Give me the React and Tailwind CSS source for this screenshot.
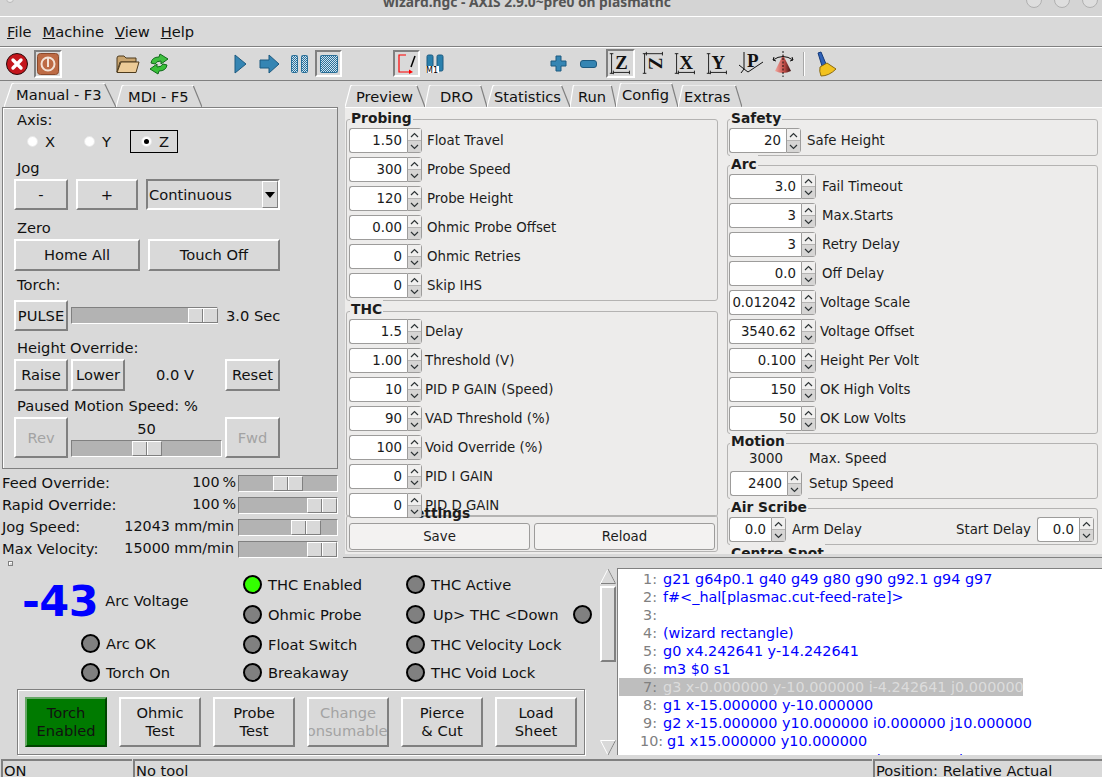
import React from 'react';

const raised = "border-2 border-t-white border-l-white border-r-[#808080] border-b-[#808080]";
const sunken = "border-2 border-t-[#808080] border-l-[#808080] border-r-white border-b-white";

const Btn = ({ className = "", children, disabled }) => (
  <div className={`${raised} flex items-center justify-center shrink-0 overflow-hidden ${disabled ? "text-[#a3a3a3]" : ""} ${className}`}>
    {children}
  </div>
);

// tab with slanted sides, drawn over its own text box
const Tab = ({ w, label, active, textLeft }) => (
  <div className={`relative shrink-0 ${w} ${active ? "h-[24px] z-10 bg-[#d9d9d9]" : "h-[22px]"}`}>
    <svg className="absolute inset-0 w-full h-full" preserveAspectRatio="none" viewBox="0 0 100 24" fill="none">
      <path d="M0 24 L7 1 L9 0 L88 0 L90 1" stroke="#fff" strokeWidth="1.2" vectorEffect="non-scaling-stroke" />
      <path d="M90 1 L100 24" stroke="#808080" strokeWidth="1.2" vectorEffect="non-scaling-stroke" />
    </svg>
    <div className={`absolute top-[3px] leading-[18px] whitespace-nowrap ${textLeft}`}>{label}</div>
  </div>
);

const Slider = ({ w, h = "h-[17px]", thumb }) => (
  <div className={`${w} ${h} shrink-0 bg-[#b3b3b3] flex items-stretch border border-t-[#808080] border-l-[#808080] border-r-white border-b-white`}>
    <div className={`${thumb} w-[30px] bg-[#d9d9d9] flex border border-t-white border-l-white border-r-[#808080] border-b-[#808080]`}>
      <div className="w-[14px] border-r border-[#808080]" />
      <div className="w-[14px] border-l border-white" />
    </div>
  </div>
);

const Radio = ({ on }) => (
  <div className="w-[11px] h-[11px] rounded-full bg-white border border-[#e8e8e8] flex items-center justify-center shrink-0">
    {on && <div className="w-[5px] h-[5px] rounded-full bg-black" />}
  </div>
);

const Chevron = ({ up }) => (
  <svg width="9" height="6" viewBox="0 0 9 6" fill="none" stroke="#2e3436" strokeWidth="1.2">
    <path d={up ? "M1 5 L4.5 1.5 L8 5" : "M1 1 L4.5 4.5 L8 1"} />
  </svg>
);

const Spin = ({ value, w = "w-[73px]", className = "" }) => (
  <div className={`${w} h-[25px] shrink-0 flex relative z-20 ${className}`}>
    <div className="flex-1 bg-white border border-[#9d9c9b] rounded-l-[3px] border-r-0 text-right pr-[5px] leading-[23px] text-[#1a1a1a]">{value}</div>
    <div className="w-[15px] border border-[#9d9c9b] rounded-r-[3px] flex flex-col">
      <div className="flex-1 bg-[#f0efee] flex items-center justify-center border-b border-[#b5b4b3]"><Chevron up /></div>
      <div className="flex-1 bg-[#d6d5d4] flex items-center justify-center"><Chevron /></div>
    </div>
  </div>
);

const Row = ({ value, label, w, gap = "ml-[5px]" }) => (
  <div className="flex items-center h-[25px] mb-[4px]">
    <Spin value={value} w={w} />
    <span className={`${gap} whitespace-nowrap`}>{label}</span>
  </div>
);

const Frame = ({ title, className = "", legend = "-top-[11px] left-[3px] bg-[#edeceb] px-[1px]", children }) => (
  <div className={`relative border border-[#b4b3b2] rounded-[3px] ${className}`}>
    <div className={`absolute z-10 font-bold text-[13.8px] leading-[18px] whitespace-nowrap ${legend}`}>{title}</div>
    {children}
  </div>
);

const Ind = ({ on, label, className = "", textGap = "ml-[6px]", children }) => (
  <div className={`flex items-center h-[19px] ${className}`}>
    <div className={`w-[19px] h-[19px] rounded-full border-2 border-black shrink-0 ${on ? "bg-[#33ff00]" : "bg-[#808080]"}`} />
    <span className={`${textGap} whitespace-nowrap`}>{label}</span>
    {children}
  </div>
);

const TBtn = ({ children, className = "" }) => (
  <div className={`${raised} w-[82px] h-[50px] shrink-0 flex flex-col items-center justify-center leading-[18px] overflow-hidden whitespace-nowrap ${className}`}>{children}</div>
);

const Dither = ({ id }) => (
  <defs>
    <pattern id={id} width="2" height="2" patternUnits="userSpaceOnUse">
      <rect width="2" height="2" fill="#cfe3f0" />
      <rect width="1" height="1" fill="#2a7099" />
      <rect x="1" y="1" width="1" height="1" fill="#2a7099" />
    </pattern>
  </defs>
);

const Axes = ({ children, top }) => (
  <g stroke="#111" strokeWidth="1" fill="none">
    <path d="M2 3 H6 M4 3 V25 M2 25 H6" />
    {top ? <path d="M6 1 V5 M6 3 H24 M24 1 V5" /> : <path d="M6 22 V26 M6 24 H24 M24 22 V26" />}
    {children}
  </g>
);

const ViewLetter = ({ ch, rot }) => (
  <text x="15" y="20" textAnchor="middle" fontFamily="Liberation Serif" fontWeight="bold" fontSize="21" fill="#111" stroke="none" transform={rot ? "rotate(90 15 14)" : undefined}>{ch}</text>
);

const code = [
  ["1:", "g21 g64p0.1 g40 g49 g80 g90 g92.1 g94 g97"],
  ["2:", "f#<_hal[plasmac.cut-feed-rate]>"],
  ["3:", ""],
  ["4:", "(wizard rectangle)"],
  ["5:", "g0 x4.242641 y-14.242641"],
  ["6:", "m3 $0 s1"],
  ["7:", "g3 x-0.000000 y-10.000000 i-4.242641 j0.000000"],
  ["8:", "g1 x-15.000000 y-10.000000"],
  ["9:", "g2 x-15.000000 y10.000000 i0.000000 j10.000000"],
  ["10:", "g1 x15.000000 y10.000000"],
  ["11:", "g2 x25.000000 y-10.000000 i-0.000000 j-10.000000"],
];

const probing = [["1.50", "Float Travel"], ["300", "Probe Speed"], ["120", "Probe Height"], ["0.00", "Ohmic Probe Offset"], ["0", "Ohmic Retries"], ["0", "Skip IHS"]];
const thc = [["1.5", "Delay"], ["1.00", "Threshold (V)"], ["10", "PID P GAIN (Speed)"], ["90", "VAD Threshold (%)"], ["100", "Void Override (%)"], ["0", "PID I GAIN"], ["0", "PID D GAIN"]];
const arc = [["3.0", "Fail Timeout", "ml-[6px]"], ["3", "Max.Starts", "ml-[6px]"], ["3", "Retry Delay", "ml-[6px]"], ["0.0", "Off Delay", "ml-[6px]"], ["0.012042", "Voltage Scale", "ml-[4px]"], ["3540.62", "Voltage Offset", "ml-[4px]"], ["0.100", "Height Per Volt", "ml-[4px]"], ["150", "OK High Volts", "ml-[4px]"], ["50", "OK Low Volts", "ml-[4px]"]];

const Toolbar = () => (
  <div className="h-[34px] shrink-0 flex items-center border-b border-[#808080] shadow-[inset_0_1px_0_#fff]">
    <svg className="ml-[6px] shrink-0" width="22" height="22" viewBox="0 0 22 22">
      <circle cx="11" cy="11" r="10.5" fill="#c4161c" stroke="#2a0a0a" />
      <path d="M7 7 L15 15 M15 7 L7 15" stroke="#fff" strokeWidth="3.4" strokeLinecap="round" />
    </svg>
    <div className={`${sunken} ml-[6px] w-[28px] h-[28px] shrink-0 flex items-center justify-center`}>
      <svg width="22" height="22" viewBox="0 0 22 22">
        <rect x="0.5" y="0.5" width="21" height="21" rx="3" fill="#bd6b45" stroke="#8a4a2c" />
        <circle cx="11" cy="11" r="6.5" fill="none" stroke="#f3e2d6" strokeWidth="2" />
        <rect x="10" y="5" width="2" height="9" fill="#f3e2d6" />
      </svg>
    </div>
    <svg className="ml-[54px] shrink-0" width="24" height="20" viewBox="0 0 24 20">
      <path d="M1 4 Q1 2 3 2 H8 L10 4 H20 V8 H4 L1 18 Z" fill="#c9a56f" stroke="#4d3b1e" />
      <path d="M5 8 H23 L20 18.5 H1 Z" fill="#eccb97" stroke="#4d3b1e" />
    </svg>
    <svg className="ml-[7px] shrink-0" width="24" height="24" viewBox="0 0 24 24">
      <path d="M4 11 Q5 5 12 5 L13 2 L21 7 L14 12 L14 9 Q9 9 8 12 Z" fill="#3fbf3f" stroke="#0f6a1a" />
      <path d="M20 13 Q19 19 12 19 L11 22 L3 17 L10 12 L10 15 Q15 15 16 12 Z" fill="#38c038" stroke="#0f6a1a" />
    </svg>
    <svg className="ml-[63px] shrink-0" width="13" height="20" viewBox="0 0 13 20">
      <path d="M1 1 L12 10 L1 19 Z" fill="#3585b3" stroke="#1d5a80" />
    </svg>
    <svg className="ml-[12px] shrink-0" width="21" height="20" viewBox="0 0 21 20">
      <path d="M1 6 H10 V1 L20 10 L10 19 V14 H1 Z" fill="#3585b3" stroke="#1d5a80" strokeLinejoin="round" />
    </svg>
    <svg className="ml-[11px] shrink-0" width="17" height="18" viewBox="0 0 17 18">
      <Dither id="d1" />
      <rect x="0.5" y="0.5" width="6" height="17" rx="1" fill="url(#d1)" stroke="#2a7099" />
      <rect x="10.5" y="0.5" width="6" height="17" rx="1" fill="url(#d1)" stroke="#2a7099" />
    </svg>
    <div className={`${sunken} ml-[7px] w-[27px] h-[27px] shrink-0 flex items-center justify-center`}>
      <svg width="18" height="18" viewBox="0 0 18 18">
        <Dither id="d2" />
        <rect x="0.5" y="0.5" width="17" height="17" rx="1" fill="url(#d2)" stroke="#2a7099" />
      </svg>
    </div>
    <div className={`${sunken} ml-[51px] w-[27px] h-[27px] shrink-0 flex items-center justify-center`}>
      <svg width="21" height="21" viewBox="0 0 21 21">
        <path d="M10 2 H3 V19 H14" fill="none" stroke="#f00" strokeWidth="1.2" />
        <path d="M13 16.5 L17 19 L13 21 Z" fill="#f00" />
        <path d="M19 3 L15 14" stroke="#000" strokeWidth="1.5" />
      </svg>
    </div>
    <svg className="ml-[6px] shrink-0" width="19" height="20" viewBox="0 0 19 20">
      <rect x="1" y="1" width="6" height="16" rx="1.5" fill="#2a80ad" stroke="#1d5a80" />
      <rect x="11" y="1" width="6" height="16" rx="1.5" fill="#2a80ad" stroke="#1d5a80" />
      <rect x="0" y="12" width="13" height="7" fill="#fff" />
      <text x="0" y="19" fontFamily="DejaVu Sans" fontSize="8" fill="#000">M1</text>
    </svg>
    <svg className="ml-[105px] shrink-0" width="17" height="17" viewBox="0 0 17 17">
      <path d="M6 1 H11 V6 H16 V11 H11 V16 H6 V11 H1 V6 H6 Z" fill="#3585b3" stroke="#1d5a80" strokeLinejoin="round" />
    </svg>
    <svg className="ml-[13px] shrink-0" width="17" height="8" viewBox="0 0 17 8">
      <rect x="0.5" y="0.5" width="16" height="7" rx="2.5" fill="#3585b3" stroke="#1d5a80" />
    </svg>
    <div className={`${sunken} ml-[9px] w-[29px] h-[29px] shrink-0 flex items-center justify-center`}>
      <svg width="25" height="25" viewBox="0 0 28 28"><Axes><ViewLetter ch="Z" /></Axes></svg>
    </div>
    <svg className="ml-[6px] shrink-0" width="25" height="25" viewBox="0 0 28 28"><Axes top><ViewLetter ch="Z" rot /></Axes></svg>
    <svg className="ml-[7px] shrink-0" width="25" height="25" viewBox="0 0 28 28"><Axes><ViewLetter ch="X" /></Axes></svg>
    <svg className="ml-[7px] shrink-0" width="25" height="25" viewBox="0 0 28 28"><Axes><ViewLetter ch="Y" /></Axes></svg>
    <svg className="ml-[6px] shrink-0" width="28" height="25" viewBox="0 0 28 25">
      <g stroke="#111" fill="none">
        <path d="M8 1 V18 L3 14 M8 18 L5 22 M8 18 L12 21 M12 21 L27 11" />
      </g>
      <text x="11" y="16" fontFamily="Liberation Serif" fontWeight="bold" fontSize="19" fill="#111">P</text>
    </svg>
    <svg className="ml-[8px] shrink-0" width="22" height="26" viewBox="0 0 22 26">
      <defs>
        <linearGradient id="cone" x1="0" x2="1" y1="0" y2="0">
          <stop offset="0" stopColor="#f0a8a0" />
          <stop offset="0.55" stopColor="#c8504a" />
          <stop offset="1" stopColor="#3c1010" />
        </linearGradient>
      </defs>
      <path d="M11 4 L3 20 Q11 24 19 20 Z" fill="url(#cone)" />
      <path d="M1 9 Q11 2 21 9 M1 9 L2 6 M1 9 L4 10 M21 9 L20 6 M21 9 L18 10" stroke="#111" fill="none" />
      <path d="M11 0 V26" stroke="#111" strokeDasharray="2 1.5" />
    </svg>
    <div className="ml-[9px] w-[1px] h-[24px] bg-[#a8a8a8] border-r border-white box-content shrink-0" />
    <svg className="ml-[10px] shrink-0" width="22" height="26" viewBox="0 0 22 26">
      <path d="M3 2 L6 1 L11 13 L7 15 Z" fill="#2f62b8" stroke="#143a7a" />
      <path d="M5 16 L12 12 L21 18 Q14 25 6 25 Q4 20 5 16 Z" fill="#f2c21f" stroke="#8a6a10" />
    </svg>
  </div>
);

const ManualTab = () => (
  <div className="ml-[2px] w-[336px] h-[362px] border border-[#808080] shadow-[inset_1px_1px_0_#fff] pl-[11px] pt-[3px] shrink-0">
    <div className="ml-[3px] leading-[18px]">Axis:</div>
    <div className="flex items-center h-[23px] mt-[1px]">
      <div className="ml-[13px] w-[57px] flex items-center"><Radio /><span className="ml-[7px]">X</span></div>
      <div className="w-[46px] flex items-center"><Radio /><span className="ml-[7px]">Y</span></div>
      <div className="w-[48px] h-[23px] border border-black flex items-center pl-[10px]"><Radio on /><span className="ml-[7px]">Z</span></div>
    </div>
    <div className="ml-[3px] mt-[6px] leading-[18px]">Jog</div>
    <div className="flex mt-[2px] h-[31px]">
      <Btn className="w-[54px]">-</Btn>
      <Btn className="w-[62px] ml-[8px]">+</Btn>
      <div className={`${sunken} w-[134px] ml-[8px] flex items-center pl-[1px] justify-between`}>
        <span>Continuous</span>
        <div className="w-[16px] h-[27px] border border-[#808080] border-l-white border-t-white flex items-center justify-center">
          <div className="w-0 h-0 border-x-[5px] border-x-transparent border-t-[6px] border-t-black" />
        </div>
      </div>
    </div>
    <div className="ml-[3px] mt-[9px] leading-[18px]">Zero</div>
    <div className="flex mt-[2px] h-[32px]">
      <Btn className="w-[126px]">Home All</Btn>
      <Btn className="w-[132px] ml-[8px]">Touch Off</Btn>
    </div>
    <div className="ml-[3px] mt-[5px] leading-[18px]">Torch:</div>
    <div className="flex items-center mt-[6px] h-[31px]">
      <Btn className="w-[54px] h-[31px]">PULSE</Btn>
      <div className="ml-[3px]"><Slider w="w-[147px]" thumb="ml-[116px]" /></div>
      <span className="ml-[8px] whitespace-nowrap">3.0 Sec</span>
    </div>
    <div className="ml-[3px] mt-[8px] leading-[18px]">Height Override:</div>
    <div className="flex items-center mt-[2px] h-[32px]">
      <Btn className="w-[54px] h-[32px]">Raise</Btn>
      <Btn className="w-[54px] h-[32px] ml-[3px]">Lower</Btn>
      <span className="w-[100px] text-center">0.0 V</span>
      <Btn className="w-[55px] h-[32px]">Reset</Btn>
    </div>
    <div className="ml-[3px] mt-[6px] leading-[18px]">Paused Motion Speed: %</div>
    <div className="flex mt-[2px] h-[41px]">
      <Btn disabled className="w-[54px]">Rev</Btn>
      <div className="ml-[3px] w-[151px] flex flex-col items-center justify-end pb-[1px]">
        <div className="leading-[18px] mb-[2px]">50</div>
        <Slider w="w-[151px]" thumb="ml-[60px]" />
      </div>
      <Btn disabled className="w-[55px] ml-[3px]">Fwd</Btn>
    </div>
  </div>
);

const speeds = [
  ["Feed Override:", "100\u2009%", "ml-[2px]", "ml-[34px]"],
  ["Rapid Override:", "100\u2009%", "ml-[2px]", "ml-[68px]"],
  ["Jog Speed:", "12043 mm/min", "ml-[4px]", "ml-[52px]"],
  ["Max Velocity:", "15000 mm/min", "ml-[4px]", "ml-[68px]"],
];

const LeftColumn = () => (
  <div className="w-[343px] shrink-0 flex flex-col">
    <div className="flex items-end h-[26px] shrink-0 pl-[4px]">
      <Tab w="w-[112px]" label="Manual - F3" active textLeft="left-[12px]" />
      <Tab w="w-[86px]" label="MDI - F5" textLeft="left-[12px]" />
    </div>
    <ManualTab />
    <div className="pt-[3px] pl-[2px] w-[338px] shrink-0">
      {speeds.map(([label, val, gap, thumb]) => (
        <div key={label} className="flex items-center h-[22px] whitespace-nowrap">
          <span className="flex-1">{label}</span>
          <span className="text-[14.3px]">{val}</span>
          <div className={gap}><Slider w="w-[100px]" thumb={thumb} /></div>
        </div>
      ))}
    </div>
    <div className="w-[5px] h-[5px] ml-[8px] mt-[1px] shrink-0 bg-[#d9d9d9] border border-[#808080] shadow-[inset_1px_1px_0_#fff]" />
  </div>
);

const RightColumn = () => (
  <div className="flex-1 flex flex-col border-b border-[#808080] min-w-0">
    <div className="flex items-end h-[26px] shrink-0 pl-[2px]">
      <Tab w="w-[80px]" label="Preview" textLeft="left-[11px]" />
      <Tab w="w-[62px]" label="DRO" textLeft="left-[15px]" />
      <Tab w="w-[83px]" label="Statistics" textLeft="left-[7px]" />
      <Tab w="w-[46px]" label="Run" textLeft="left-[8px]" />
      <Tab w="w-[62px]" label="Config" active textLeft="left-[6px]" />
      <Tab w="w-[64px]" label="Extras" textLeft="left-[6px]" />
    </div>
    <div className="ml-[2px] h-[447px] shrink-0 bg-[#edeceb] flex overflow-hidden border-t border-white text-[#1c1c1c] text-[13.33px]">
      <div className="w-[372px] ml-[1px] pt-[11px] shrink-0">
        <Frame title="Probing" className="h-[182px] pl-[2px] pt-[8px]">
          {probing.map(([v, l]) => <Row key={l} value={v} label={l} />)}
        </Frame>
        <Frame title="THC" legend="-top-[12px] left-[3px] bg-[#edeceb] px-[1px]" className="h-[206px] mt-[10px] pl-[2px] pt-[7px]">
          {thc.map(([v, l]) => <Row key={l} value={v} label={l} gap="ml-[3px]" />)}
        </Frame>
        <div className="relative z-10">
          <Frame title="Settings" legend="-top-[12px] left-[58px]" className="h-[37px] -mt-[2px] flex items-end gap-[4px] px-[2px] pb-[1px]">
            <div className="relative z-30 flex-1 h-[27px] rounded-[3px] border border-[#9d9c9b] bg-[#f3f2f1] flex items-center justify-center">Save</div>
            <div className="relative z-30 flex-1 h-[27px] rounded-[3px] border border-[#9d9c9b] bg-[#f3f2f1] flex items-center justify-center">Reload</div>
          </Frame>
        </div>
      </div>
      <div className="w-[371px] ml-[9px] pt-[11px] shrink-0">
        <Frame title="Safety" legend="-top-[11px] left-[2px] bg-[#edeceb] px-[1px]" className="h-[37px] pl-[1px] pt-[8px]">
          <Row value="20" label="Safe Height" w="w-[72px]" gap="ml-[6px]" />
        </Frame>
        <Frame title="Arc" legend="-top-[11px] left-[2px] bg-[#edeceb] px-[1px]" className="h-[269px] mt-[9px] pl-[1px] pt-[8px]">
          {arc.map(([v, l, g]) => <Row key={l} value={v} label={l} w="w-[87px]" gap={g} />)}
        </Frame>
        <Frame title="Motion" legend="-top-[12px] left-[2px] bg-[#edeceb] px-[1px]" className="h-[56px] mt-[9px] pl-[2px] pt-[6px]">
          <div className="flex h-[18px] items-center leading-[18px]">
            <span className="w-[72px] text-center">3000</span>
            <span className="ml-[7px]">Max. Speed</span>
          </div>
          <div className="mt-[3px]"><Row value="2400" label="Setup Speed" w="w-[72px]" gap="ml-[7px]" /></div>
        </Frame>
        <Frame title="Air Scribe" legend="-top-[11px] left-[2px] bg-[#edeceb] px-[1px]" className="h-[37px] mt-[9px] pl-[1px] pr-[3px] pt-[8px] flex justify-between">
          <Row value="0.0" label="Arm Delay" w="w-[57px]" gap="ml-[6px]" />
          <div className="flex items-center h-[25px]">
            <span className="mr-[6px]">Start Delay</span>
            <Spin value="0.0" w="w-[57px]" />
          </div>
        </Frame>
        <Frame title="Centre Spot" legend="-top-[11px] left-[2px] bg-[#edeceb] px-[1px]" className="h-[20px] mt-[9px]" />
      </div>
    </div>
  </div>
);

const Bottom = () => (
  <div className="flex h-[201px] shrink-0">
    <div className="w-[600px] shrink-0 pt-[17px] relative">
      <div className="flex h-[116px]">
        <div className="w-[243px] shrink-0">
          <div className="h-[52px] flex items-center pl-[22px]">
            <span className="text-[43px] font-bold text-[#0000ff] leading-[40px] tracking-[-0.5px]">-43</span>
            <span className="ml-[7px]">Arc Voltage</span>
          </div>
          <div className="pl-[81px]">
            <Ind label="Arc OK" className="mt-[7px]" />
            <Ind label="Torch On" className="mt-[10px]" />
          </div>
        </div>
        <div className="w-[163px] shrink-0">
          <Ind on label="THC Enabled" />
          <Ind label="Ohmic Probe" className="mt-[11px]" />
          <Ind label="Float Switch" className="mt-[11px]" />
          <Ind label="Breakaway" className="mt-[9px]" />
        </div>
        <div>
          <Ind label="THC Active" />
          <Ind label="Up> THC <Down" className="mt-[11px]" textGap="ml-[8px]">
            <div className="ml-[14px] w-[19px] h-[19px] rounded-full border-2 border-black bg-[#808080]" />
          </Ind>
          <Ind label="THC Velocity Lock" className="mt-[11px]" />
          <Ind label="THC Void Lock" className="mt-[9px]" />
        </div>
      </div>
      <div className="ml-[17px] -mt-[2px] w-[568px] h-[66px] border border-[#808080] shadow-[inset_1px_1px_0_#fff,1px_1px_0_#fff] flex items-center pl-[7px] gap-[12px]">
        <div className="w-[82px] h-[50px] shrink-0 bg-[#007a00] border-2 border-t-[#66a866] border-l-[#66a866] border-r-[#004400] border-b-[#004400] flex flex-col items-center justify-center leading-[18px]">
          <span>Torch</span><span>Enabled</span>
        </div>
        <TBtn><span>Ohmic</span><span>Test</span></TBtn>
        <TBtn><span>Probe</span><span>Test</span></TBtn>
        <TBtn className="text-[#a3a3a3]"><span>Change</span><span className="mr-[12px]">Consumable</span></TBtn>
        <TBtn><span>Pierce</span><span>&amp; Cut</span></TBtn>
        <TBtn><span>Load</span><span>Sheet</span></TBtn>
      </div>
    </div>
    <div className="w-[17px] shrink-0 pt-[10px] flex flex-col h-[199px]">
      <svg width="16" height="16" viewBox="0 0 16 16" className="shrink-0">
        <path d="M8 1 L15.5 15.5 H0.5 Z" fill="#d9d9d9" stroke="#fff" />
        <path d="M8 1 L15.5 15.5 H1" fill="none" stroke="#808080" />
      </svg>
      <div className={`${raised} mt-[2px] w-[16px] h-[76px]`} />
      <div className="flex-1" />
      <svg width="16" height="16" viewBox="0 0 16 16" className="shrink-0 mb-[1px]">
        <path d="M0.5 0.5 H15.5 L8 15 Z" fill="#d9d9d9" stroke="#fff" />
        <path d="M15.5 0.5 L8 15" fill="none" stroke="#808080" />
      </svg>
    </div>
    <div className="flex-1 mt-[10px] h-[187px] bg-white border-t border-l border-[#808080] overflow-hidden pl-[1px] pt-[1px] text-[#0000ff] text-[14.4px]">
      {code.map(([n, t], i) => {
        const hl = i === 6;
        return (
          <div key={n} className={`h-[18px] leading-[18px] whitespace-pre flex ${hl ? "bg-[#bebebe] w-[404px] text-[#dcdcdc]" : ""} ${i === 10 ? "mt-[1px]" : ""}`}>
            {n.length === 2
              ? <span className="w-[38px] text-right text-[#808080] shrink-0 mr-[6px]">{n}</span>
              : <span className="w-[48px] pl-[21px] text-[#808080] shrink-0">{n}</span>}
            <span>{t}</span>
          </div>
        );
      })}
    </div>
  </div>
);

export default function App() {
  return (
    <div className="w-[1102px] h-[777px] overflow-hidden bg-[#d9d9d9] flex flex-col text-[14.67px] text-[#111] font-['DejaVu_Sans',sans-serif]">
      <div className="h-[16px] shrink-0 bg-[#d4d4d4] overflow-hidden flex justify-center relative text-[#555] pr-[48px]">
        <span className="-mt-[7px] leading-[18px] text-[13.8px] font-bold whitespace-nowrap font-['Noto_Sans',sans-serif]">wizard.ngc - AXIS 2.9.0~pre0 on plasmathc</span>
        <div className="absolute left-[6px] -top-[5px] w-[8px] h-[8px] rounded-full bg-[#e8e8e8] border border-[#b8b8b8]" />
        <div className="absolute right-[4px] -top-[8px] flex gap-[12px]">
          <div className="w-[16px] h-[16px] rounded-full border border-[#b0b0b0] bg-[#dedede]" />
          <div className="w-[16px] h-[16px] rounded-full border border-[#b0b0b0] bg-[#dedede]" />
          <div className="w-[16px] h-[16px] rounded-full border border-[#b0b0b0] bg-[#dedede]" />
        </div>
      </div>
      <div className="h-[31px] shrink-0 flex items-center px-[7px] gap-[11px] border-b border-[#808080] border-t border-t-white">
        <span><span className="underline">F</span>ile</span>
        <span><span className="underline">M</span>achine</span>
        <span><span className="underline">V</span>iew</span>
        <span><span className="underline">H</span>elp</span>
      </div>
      <Toolbar />
      <div className="h-[477px] shrink-0 flex">
        <LeftColumn />
        <RightColumn />
      </div>
      <Bottom />
      <div className="flex-1 flex overflow-hidden gap-[1px] pl-[1px]">
        <div className={`${sunken} border-b-0 border-r-0 w-[131px] pl-[1px] leading-[20px]`}>ON</div>
        <div className={`${sunken} border-b-0 border-r-0 flex-1 pl-[1px] leading-[20px]`}>No tool</div>
        <div className={`${sunken} border-b-0 border-r-0 w-[229px] pl-[1px] leading-[20px]`}>Position: Relative Actual</div>
      </div>
    </div>
  );
}
